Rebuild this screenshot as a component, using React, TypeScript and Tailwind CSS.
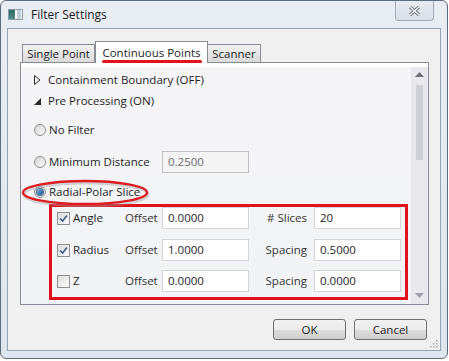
import React from 'react'

const font = { fontFamily: '"Open Sans", "Noto Sans", Arial, sans-serif' }

function Radio({ checked = false }: { checked?: boolean }) {
  return (
    <span className="flex h-[12px] w-[12px] shrink-0 items-center justify-center rounded-full border border-[#8d8d8d] bg-gradient-to-br from-[#d6d6d6] to-[#fafafa]">
      {checked && (
        <span className="h-[6px] w-[6px] rounded-full bg-gradient-to-br from-[#78b7e6] to-[#1b4e86] ring-1 ring-[#3a6a9a]" />
      )}
    </span>
  )
}

function Checkbox({ checked = false }: { checked?: boolean }) {
  return (
    <span className="flex h-[13px] w-[13px] shrink-0 items-center justify-center border border-[#8f8f8f] bg-gradient-to-br from-[#dcdcdc] to-[#fbfbfb]">
      {checked && (
        <svg width="9" height="9" viewBox="0 0 9 9">
          <path d="M1 4.5 L3.5 7 L8 1.5" fill="none" stroke="#3d5a94" strokeWidth="1.6" />
        </svg>
      )}
    </span>
  )
}

function Field({ value, disabled = false }: { value: string; disabled?: boolean }) {
  return (
    <div
      className={`flex h-[22px] w-[87px] shrink-0 items-center border px-[5px] text-[11.5px] ${
        disabled ? 'border-[#c0c0c0] bg-[#f4f4f4] text-[#6d6d6d]' : 'border-[#d5d5d5] bg-white text-[#1e1e1e]'
      }`}
    >
      {value}
    </div>
  )
}

const rows = [
  { name: 'Angle', checked: true, offset: '0.0000', label: '# Slices', right: '20' },
  { name: 'Radius', checked: true, offset: '1.0000', label: 'Spacing', right: '0.5000' },
  { name: 'Z', checked: false, offset: '0.0000', label: 'Spacing', right: '0.0000' },
]

export default function App() {
  return (
    <div className="h-[361px] w-[449px] bg-white text-[11.5px] text-[#1e1e1e]" style={font}>
      <div className="relative flex h-[359px] w-[448px] flex-col overflow-hidden rounded-[6px] border border-[#5e6b78] bg-gradient-to-b from-[#e9eef4] to-[#dde5ee]">
        {/* title bar */}
        <div className="flex h-[27px] shrink-0 items-start">
          <div className="mt-[8px] ml-[7px] flex h-[11px] w-[15px] border border-[#8a9aa8] bg-white">
            <span className="w-[6px] bg-gradient-to-b from-[#2d6b5e] to-[#4f8f8a]" />
            <span className="w-[2px]" />
            <span className="w-[4px] bg-[#bfd0d8]" />
          </div>
          <span className="mt-[5px] ml-[8px] text-[12px] text-[#1b1b1b]">Filter Settings</span>
          <div className="ml-auto mr-[13px] flex h-[20px] w-[39px] items-center justify-center rounded-b-[4px] border border-t-0 border-[#a3adb8] bg-gradient-to-b from-[#e7ecf1] to-[#d9e0e8]">
            <svg width="13" height="10" viewBox="0 0 13 10">
              <path d="M2 1 L11 9 M11 1 L2 9" stroke="#6c737a" strokeWidth="3.2" />
              <path d="M2 1 L11 9 M11 1 L2 9" stroke="#f4f6f8" strokeWidth="1.4" />
            </svg>
          </div>
        </div>

        {/* client area */}
        <div className="relative mx-[6px] flex h-[323px] flex-col border border-[#97a3b1] bg-[#f0f0f0] px-[12px] pt-[12px]">
          {/* tabs */}
          <div className="flex h-[21px] items-end pl-[2px]">
            <div className="flex h-[18px] w-[73px] items-center justify-center border border-b-0 border-[#898c95] bg-gradient-to-b from-[#f2f2f2] to-[#dadada]">
              Single Point
            </div>
            <div className="relative z-10 -mb-px flex h-[22px] w-[113px] items-start justify-center border border-b-0 border-[#898c95] bg-white pt-[2px]">
              Continuous Points
              <span className="absolute bottom-[0px] left-[6px] h-[3px] w-[100px] rounded-full bg-[#e0121c]" />
            </div>
            <div className="flex h-[18px] w-[53px] items-center justify-center border border-b-0 border-l-0 border-[#898c95] bg-gradient-to-b from-[#f2f2f2] to-[#dadada]">
              Scanner
            </div>
          </div>

          {/* pane */}
          <div className="flex h-[243px] w-[409px] flex-col border border-[#898c95] bg-white pt-[4px]">
            <div className="flex min-h-0 flex-1">
              <div className="relative flex-1 bg-gradient-to-b from-[#f5f5f7] to-[#f2f3f6] pt-[2px]">
                <div className="flex h-[21px] items-center pl-[13px]">
                  <svg width="7" height="10" viewBox="0 0 7 10" className="mr-[7px]">
                    <path d="M0.5 0.5 L6 5 L0.5 9.5 Z" fill="none" stroke="#2a2a2a" />
                  </svg>
                  Containment Boundary (OFF)
                </div>
                <div className="flex h-[21px] items-center pl-[13px]">
                  <svg width="7" height="10" viewBox="0 0 7 10" className="mr-[7px]">
                    <path d="M7 2 L7 9 L0 9 Z" fill="#2a2a2a" />
                  </svg>
                  Pre Processing (ON)
                </div>

                <div className="mt-[8px] flex h-[22px] items-center gap-[3px] pl-[13px]">
                  <Radio />
                  No Filter
                </div>
                <div className="mt-[10px] flex h-[22px] items-center pl-[13px]">
                  <Radio />
                  <span className="ml-[3px] w-[113px]">Minimum Distance</span>
                  <Field value="0.2500" disabled />
                </div>
                <div className="relative mt-[8px] flex h-[22px] items-center gap-[3px] pl-[13px]">
                  <Radio checked />
                  Radial-Polar Slice
                  <svg
                    width="130"
                    height="29"
                    viewBox="0 0 130 29"
                    className="pointer-events-none absolute left-[0px] top-[-3px]"
                  >
                    <ellipse cx="64" cy="15" rx="62" ry="11.5" fill="none" stroke="#9a9a9a" strokeOpacity="0.4" strokeWidth="3" transform="translate(1 1.5)" />
                    <ellipse cx="64" cy="14.5" rx="62" ry="11.5" fill="none" stroke="#df1b22" strokeWidth="2.4" />
                  </svg>
                </div>

                <div className="mt-[1px] ml-[28px] mr-[3px] flex flex-col gap-[10px] border-[3px] border-[#e0121c] pb-[5px] pl-[5px]">
                  {rows.map((r, i) => (
                    <div key={r.name} className={`flex h-[22px] items-center ${i === 2 ? '-mt-px' : ''}`}>
                      <Checkbox checked={r.checked} />
                      <span className="ml-[3px] w-[52px]">{r.name}</span>
                      <span className="w-[37px] text-[#333]">Offset</span>
                      <Field value={r.offset} />
                      <span className="w-[58px] text-right text-[#333]">{r.label}</span>
                      <span className="ml-[7px]">
                        <Field value={r.right} />
                      </span>
                    </div>
                  ))}
                </div>
              </div>

              {/* scrollbar */}
              <div className="flex w-[17px] flex-col items-center bg-[#e9e9ed]">
                <svg width="9" height="5" viewBox="0 0 9 5" className="mt-[5px]">
                  <path d="M0 5 L4.5 0 L9 5 Z" fill="#6f6f78" />
                </svg>
                <div className="mt-[8px] h-[75px] w-[7px] bg-[#cfcfd6]" />
                <svg width="9" height="5" viewBox="0 0 9 5" className="mt-auto mb-[6px]">
                  <path d="M0 0 L9 0 L4.5 5 Z" fill="#a2a2aa" />
                </svg>
              </div>
            </div>
          </div>

          {/* buttons */}
          <div className="mt-[14px] flex justify-end gap-[8px] pr-[1px]">
            <button className="h-[21px] w-[73px] rounded-[3px] border border-[#707070] bg-[linear-gradient(#f2f2f2_0%,#ebebeb_50%,#dddddd_51%,#cfcfcf_100%)] text-[11.5px]">
              OK
            </button>
            <button className="h-[21px] w-[73px] rounded-[3px] border border-[#707070] bg-[linear-gradient(#f2f2f2_0%,#ebebeb_50%,#dddddd_51%,#cfcfcf_100%)] text-[11.5px]">
              Cancel
            </button>
          </div>

          {/* size grip */}
          <svg width="8" height="8" viewBox="0 0 8 8" className="absolute right-[2px] bottom-[2px]">
            {[
              [6, 0],
              [6, 3],
              [3, 3],
              [6, 6],
              [3, 6],
              [0, 6],
            ].map(([x, y]) => (
              <rect key={`${x}-${y}`} x={x} y={y} width="1.5" height="1.5" fill="#a8a8a8" />
            ))}
          </svg>
        </div>
      </div>
    </div>
  )
}
